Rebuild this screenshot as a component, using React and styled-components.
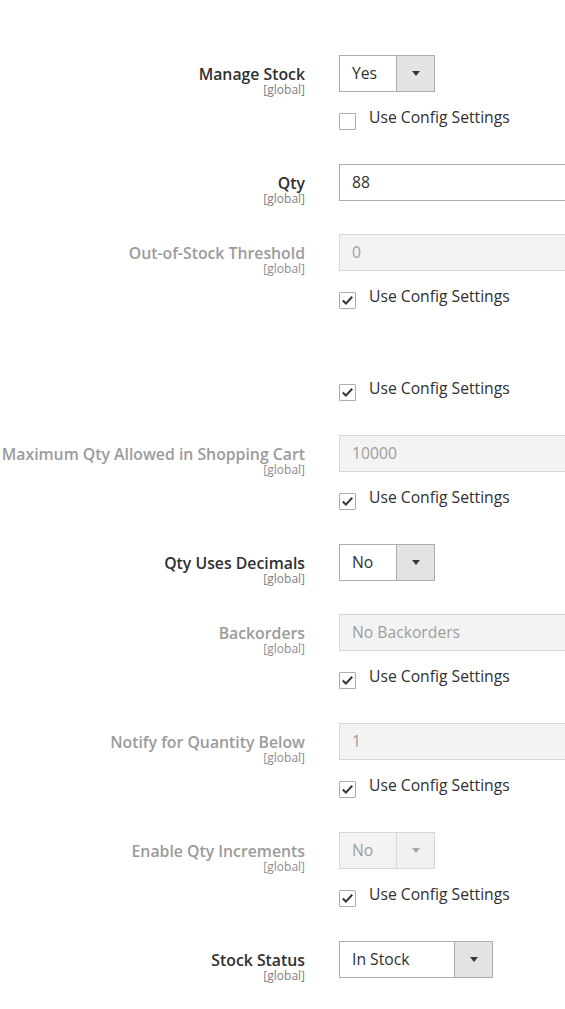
import styled, {createGlobalStyle} from "styled-components";

const GlobalStyle = createGlobalStyle`
    html, body {
        margin: 0;
        padding: 0;
        background: #ffffff;
        overflow: hidden;
    }
    body {
        font-family: "Open Sans", "Liberation Sans", Arial, sans-serif;
        color: #303030;
    }
`;

const Page = styled.div`
    width: 565px;
    overflow: hidden;
    padding-top: 55px;
`;

const Field = styled.div`
    display: grid;
    grid-template-columns: 305px 300px;
    column-gap: 34px;
    align-items: start;
    margin-bottom: 33px;
`;

// label column is kept at the control height so the scope line never pushes the row down
const Label = styled.div`
    box-sizing: border-box;
    height: 37px;
    text-align: right;
    padding-top: 11px;
    white-space: nowrap;
`;

const LabelText = styled.div`
    font-size: 15.8px;
    line-height: 16px;
    font-weight: 600;
    color: ${({disabled}) => (disabled ? "#9b9b9b" : "#303030")};
`;

const Scope = styled.div`
    font-size: 12px;
    line-height: 15px;
    color: ${({disabled}) => (disabled ? "#8c8c8c" : "#808080")};
`;

const Control = styled.div`
    display: flex;
    flex-direction: column;
`;

const Spacer = styled.div`
    height: 20px;
`;

const Input = styled.div`
    box-sizing: border-box;
    width: 300px;
    height: 37px;
    padding: 0 12px 2px;
    display: flex;
    align-items: center;
    font-size: 15.7px;
    border: 1px solid ${({disabled}) => (disabled ? "#d6d6d6" : "#adadad")};
    background: ${({disabled}) => (disabled ? "#f3f3f3" : "#ffffff")};
    color: ${({disabled}) => (disabled ? "#9d9d9d" : "#303030")};
`;

const Select = styled.div`
    box-sizing: border-box;
    width: ${({width}) => width}px;
    height: 37px;
    display: flex;
    border: 1px solid ${({disabled}) => (disabled ? "#d6d6d6" : "#adadad")};
    background: ${({disabled}) => (disabled ? "#f3f3f3" : "#ffffff")};
    color: ${({disabled}) => (disabled ? "#9d9d9d" : "#303030")};
    font-size: 15.7px;
`;

const SelectValue = styled.div`
    flex: 1;
    display: flex;
    align-items: center;
    padding: 0 12px 2px;
    white-space: nowrap;
`;

const SelectArrow = styled.div`
    width: 37px;
    flex: none;
    display: flex;
    align-items: center;
    justify-content: center;
    border-left: 1px solid ${({disabled}) => (disabled ? "#d6d6d6" : "#adadad")};
    background: ${({disabled}) => (disabled ? "#f1f1f1" : "#e3e3e3")};

    &::after {
        content: "";
        width: 0;
        height: 0;
        border-left: 4px solid transparent;
        border-right: 4px solid transparent;
        border-top: 5px solid ${({disabled}) => (disabled ? "#a8a8a8" : "#41362f")};
    }
`;

const CheckRow = styled.div`
    display: flex;
    align-items: flex-start;
    margin-top: 15px;
    height: 24px;
    font-size: 15.7px;
    line-height: 20px;
    color: #303030;
    white-space: nowrap;
`;

const Box = styled.div`
    box-sizing: border-box;
    width: 17px;
    height: 17px;
    margin-top: 6px;
    margin-right: 13px;
    border: 1px solid #adadad;
    border-radius: 1px;
    background: #ffffff;
    display: flex;
    align-items: center;
    justify-content: center;
`;

const CheckIcon = () => (
    <svg width="13" height="13" viewBox="0 0 13 13">
        <polyline points="1.8,6.6 4.9,9.6 11.2,2.8" fill="none" stroke="#41362f" strokeWidth="2.1"/>
    </svg>
);

const UseConfig = ({checked}) => (
    <CheckRow>
        <Box>{checked ? <CheckIcon/> : null}</Box>
        Use Config Settings
    </CheckRow>
);

const fields = [
    {label: "Manage Stock", type: "select", value: "Yes", width: 96, unchecked: true},
    {label: "Qty", type: "input", value: "88"},
    {label: "Out-of-Stock Threshold", disabled: true, type: "input", value: "0", check: true},
    {label: null, type: "none", check: true},
    {label: "Maximum Qty Allowed in Shopping Cart", disabled: true, type: "input", value: "10000", check: true},
    {label: "Qty Uses Decimals", type: "select", value: "No", width: 96},
    {label: "Backorders", disabled: true, type: "select", value: "No Backorders", width: 300, check: true},
    {label: "Notify for Quantity Below", disabled: true, type: "input", value: "1", check: true},
    {label: "Enable Qty Increments", disabled: true, type: "select", value: "No", width: 96, check: true},
    {label: "Stock Status", type: "select", value: "In Stock", width: 154},
];

const FieldControl = ({item}) => {
    if (item.type === "input") {
        return <Input disabled={item.disabled}>{item.value}</Input>;
    }
    if (item.type === "select") {
        return (
            <Select width={item.width} disabled={item.disabled}>
                <SelectValue>{item.value}</SelectValue>
                <SelectArrow disabled={item.disabled}/>
            </Select>
        );
    }
    return <Spacer/>;
};

const App = () => {
    return (
        <Page>
            <GlobalStyle/>
            {fields.map((item, index) =>
                <Field key={index}>
                    <Label>
                        {item.label ? <>
                            <LabelText disabled={item.disabled}>{item.label}</LabelText>
                            <Scope disabled={item.disabled}>[global]</Scope>
                        </> : null}
                    </Label>
                    <Control>
                        <FieldControl item={item}/>
                        {item.check ? <UseConfig checked/> : null}
                        {item.unchecked ? <UseConfig checked={false}/> : null}
                    </Control>
                </Field>
            )}
        </Page>
    );
};

export default App;
